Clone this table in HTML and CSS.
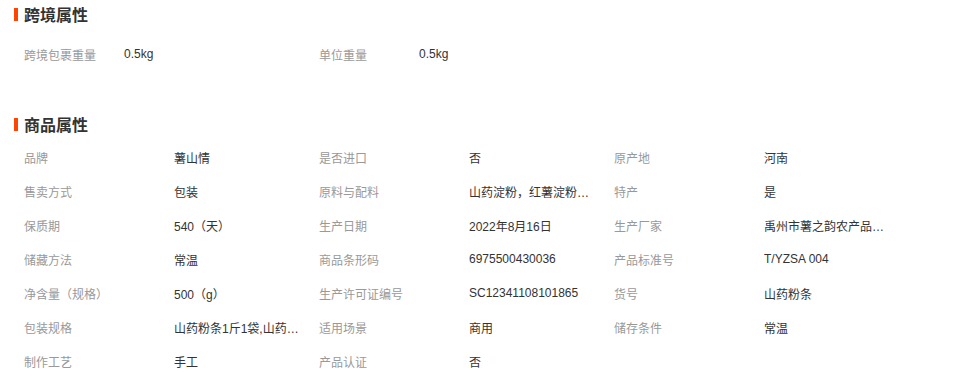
FILE: index.html
```html
<!DOCTYPE html>
<html lang="zh-CN">
<head>
<meta charset="utf-8">
<link rel="stylesheet" href="styles.css">
</head>
<body>
<div class="page">
  <section class="section">
    <h2 class="title"><span class="bar"></span>跨境属性</h2>
    <div class="grid cross">
      <div class="pair narrow"><span class="label">跨境包裹重量</span><span class="value">0.5kg</span></div>
      <div class="pair narrow"><span class="label">单位重量</span><span class="value">0.5kg</span></div>
    </div>
  </section>
  <section class="section goods">
    <h2 class="title"><span class="bar"></span>商品属性</h2>
    <div class="grid attrs">
      <div class="pair"><span class="label">品牌</span><span class="value">薯山情</span></div>
      <div class="pair"><span class="label">是否进口</span><span class="value">否</span></div>
      <div class="pair"><span class="label">原产地</span><span class="value">河南</span></div>
      <div class="pair"><span class="label">售卖方式</span><span class="value">包装</span></div>
      <div class="pair"><span class="label">原料与配料</span><span class="value">山药淀粉，红薯淀粉，水</span></div>
      <div class="pair"><span class="label">特产</span><span class="value">是</span></div>
      <div class="pair"><span class="label">保质期</span><span class="value">540（天）</span></div>
      <div class="pair"><span class="label">生产日期</span><span class="value">2022年8月16日</span></div>
      <div class="pair"><span class="label">生产厂家</span><span class="value">禹州市薯之韵农产品有限公司</span></div>
      <div class="pair"><span class="label">储藏方法</span><span class="value">常温</span></div>
      <div class="pair"><span class="label">商品条形码</span><span class="value">6975500430036</span></div>
      <div class="pair"><span class="label">产品标准号</span><span class="value">T/YZSA 004</span></div>
      <div class="pair"><span class="label">净含量（规格）</span><span class="value">500（g）</span></div>
      <div class="pair"><span class="label">生产许可证编号</span><span class="value">SC12341108101865</span></div>
      <div class="pair"><span class="label">货号</span><span class="value">山药粉条</span></div>
      <div class="pair"><span class="label">包装规格</span><span class="value">山药粉条1斤1袋,山药粉条2斤</span></div>
      <div class="pair"><span class="label">适用场景</span><span class="value">商用</span></div>
      <div class="pair"><span class="label">储存条件</span><span class="value">常温</span></div>
      <div class="pair"><span class="label">制作工艺</span><span class="value">手工</span></div>
      <div class="pair"><span class="label">产品认证</span><span class="value">否</span></div>
    </div>
  </section>
</div>
</body>
</html>
```
FILE: styles.css
```css
* { box-sizing: border-box; }
html, body { margin: 0; padding: 0; background: #fff; }
body {
  font-family: "Liberation Sans", "Noto Sans CJK SC", sans-serif;
  font-size: 12px;
  color: #333;
}
.page { width: 953px; padding: 0 0 0 14px; }
.title {
  display: flex;
  align-items: center;
  gap: 6px;
  margin: 0;
  height: 28px;
  font-size: 16px;
  font-weight: bold;
  color: #333;
  font-family: "Noto Sans CJK SC", sans-serif;
}
.bar { display: block; width: 4px; height: 13px; background: #ff4400; }
.grid {
  display: grid;
  padding-left: 10px;
  grid-template-columns: repeat(3, 295px);
}
.cross { margin-top: 9px; grid-template-columns: repeat(2, 295px); }
.goods { margin-top: 39px; }
.attrs { margin-top: 2px; }
.pair { display: flex; height: 34px; align-items: center; }
.label { width: 150px; flex: none; color: #999; white-space: nowrap; }
.narrow .label { width: 100px; }
.value {
  max-width: 127px;
  white-space: nowrap;
  overflow: hidden;
  text-overflow: ellipsis;
  color: #333;
}
```
